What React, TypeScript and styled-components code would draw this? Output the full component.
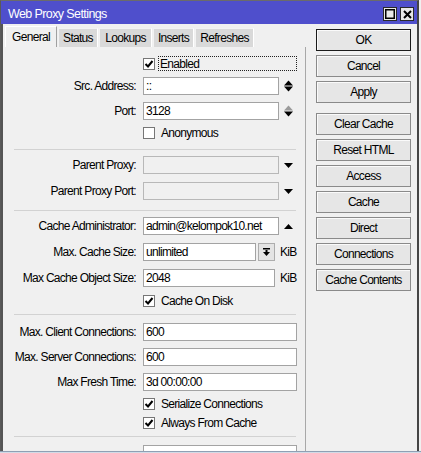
import * as React from 'react';
import styled, { createGlobalStyle } from 'styled-components';

const GlobalStyle = createGlobalStyle`
	html, body {
		margin: 0;
		padding: 0;
		background: #f0f0f0;
	}
	body {
		font-family: "Liberation Sans", Arial, sans-serif;
		font-size: 12px;
		letter-spacing: -0.7px;
		color: #000;
	}
	* {
		box-sizing: border-box;
	}
`;

const Screen = styled.div`
	width: 421px;
	height: 453px;
	display: flex;
	flex-direction: column;
	overflow: hidden;
	background: #f0f0f0;
`;

const Window = styled.div`
	width: 419px;
	height: 451px;
	display: flex;
	flex-direction: column;
	overflow: hidden;
	border-top: 1px solid #6b6b6b;
	border-left: 1px solid #5a5a5a;
	border-right: 2px solid #454545;
	background: #f0f0f0;
`;

const Taskbar = styled.div`
	height: 2px;
	border-top: 1px solid #8fa0b4;
	background: #d2dbe6;
`;

const TitleBar = styled.div`
	height: 23px;
	flex-shrink: 0;
	display: flex;
	align-items: center;
	background: #4f4fcc;
	color: #fff;
	padding: 2px 3px 0 7px;
`;

const Title = styled.div`
	flex: 1;
	font-size: 12.5px;
	letter-spacing: -0.6px;
	color: #fff;
`;

const TitleButtons = styled.div`
	display: flex;
	gap: 3px;
	align-self: flex-end;
	margin-bottom: 3px;
`;

const TitleButton = styled.div`
	width: 14px;
	height: 14px;
	background: #e8e8e8;
	border: 1px solid #2a2a2a;
	display: flex;
	align-items: center;
	justify-content: center;
`;

const Body = styled.div`
	flex: 1;
	display: flex;
	border-left: 2px solid #555;
	min-height: 0;
`;

const TabArea = styled.div`
	width: 303px;
	display: flex;
	flex-direction: column;
	padding-top: 2px;
`;

const TabStrip = styled.div`
	height: 21px;
	display: flex;
	align-items: flex-end;
	gap: 1px;
	padding-left: 2px;
	flex-shrink: 0;
`;

const Tab = styled.div<{ $active?: boolean; $w: number }>`
	width: ${props => props.$w}px;
	height: ${props => props.$active ? '21px' : '19px'};
	flex-shrink: 0;
	display: flex;
	align-items: center;
	justify-content: center;
	background: ${props => props.$active ? '#f0f0f0' : '#d9d9d9'};
	border-top: 1px solid ${props => props.$active ? '#ffffff' : '#f2f2f2'};
	border-left: 1px solid ${props => props.$active ? '#ffffff' : '#f2f2f2'};
	border-right: 1px solid ${props => props.$active ? '#a0a0a0' : '#ffffff'};
	white-space: nowrap;
`;

const Panel = styled.div`
	flex: 1;
	border-right: 1px solid #a8a8a8;
	display: flex;
	flex-direction: column;
	min-height: 0;
`;

const Section = styled.div<{ $top: number; $bottom: number }>`
	padding-top: ${props => props.$top}px;
	padding-bottom: ${props => props.$bottom}px;
	display: flex;
	flex-direction: column;
	flex-shrink: 0;
`;

const Separator = styled.div`
	height: 1px;
	margin: 0 9px 0 11px;
	background: #d2d2d2;
	flex-shrink: 0;
`;

const Row = styled.div<{ $h: number }>`
	height: ${props => props.$h}px;
	display: flex;
	align-items: center;
	flex-shrink: 0;
`;

const Label = styled.div`
	width: 133px;
	margin-right: 7px;
	text-align: right;
	white-space: nowrap;
	flex-shrink: 0;
`;

const TextBox = styled.div<{ $w: number; $disabled?: boolean }>`
	width: ${props => props.$w}px;
	height: 18px;
	flex-shrink: 0;
	border: 1px solid ${props => props.$disabled ? '#b8b8b8' : '#a3a3a3'};
	background: ${props => props.$disabled ? '#f0f0f0' : '#ffffff'};
	padding-left: 2px;
	display: flex;
	align-items: center;
	white-space: nowrap;
	overflow: hidden;
`;

const Trailer = styled.div`
	margin-left: 5px;
	width: 9px;
	display: flex;
	align-items: center;
	justify-content: center;
`;

const SmallButton = styled.div`
	width: 17px;
	height: 18px;
	margin-left: 2px;
	background: #e4e4e4;
	border: 1px solid #adadad;
	display: flex;
	align-items: center;
	justify-content: center;
`;

const Unit = styled.div`
	margin-left: 5px;
`;

const CheckBox = styled.div`
	width: 12px;
	height: 12px;
	margin-left: 140px;
	border: 1px solid #767676;
	background: #fff;
	display: flex;
	align-items: center;
	justify-content: center;
	flex-shrink: 0;
`;

const CheckLabel = styled.div<{ $focused?: boolean }>`
	margin-left: ${props => props.$focused ? '3px' : '5px'};
	padding: 0 1px;
	height: 15px;
	display: flex;
	align-items: center;
	border: ${props => props.$focused ? '1px dotted #222' : 'none'};
	width: ${props => props.$focused ? '139px' : 'auto'};
`;

const ButtonColumn = styled.div`
	padding: 5px 0 0 10px;
	display: flex;
	flex-direction: column;
	gap: 10px;
`;

const ButtonGroup = styled.div`
	display: flex;
	flex-direction: column;
	gap: 4px;
`;

const Button = styled.div<{ $primary?: boolean }>`
	width: 95px;
	height: 22px;
	display: flex;
	align-items: center;
	justify-content: center;
	background: #e6e6e6;
	border: 1px solid ${props => props.$primary ? '#1a1a1a' : '#8a8a8a'};
	box-shadow: inset 1px 1px 0 #fafafa;
	white-space: nowrap;
`;

const Check = () => (
	<svg width="10" height="10" viewBox="0 0 10 10">
		<path d="M1.5 5 L4 7.5 L8.5 2" fill="none" stroke="#000" strokeWidth="2" />
	</svg>
);

const Spinner = ({ dim }: { dim?: boolean }) => (
	<svg width="9" height="12" viewBox="0 0 9 12">
		<path d="M0 5.5 L4.5 0.5 L9 5.5 Z" fill={dim ? '#9a9a9a' : '#000'} />
		<path d="M0 6.5 L4.5 11.5 L9 6.5 Z" fill="#000" />
	</svg>
);

const ArrowDown = () => (
	<svg width="9" height="5" viewBox="0 0 9 5">
		<path d="M0 0 L9 0 L4.5 5 Z" fill="#000" />
	</svg>
);

const ArrowUp = () => (
	<svg width="9" height="5" viewBox="0 0 9 5">
		<path d="M0 5 L9 5 L4.5 0 Z" fill="#000" />
	</svg>
);

const DropIcon = () => (
	<svg width="7" height="8" viewBox="0 0 7 8">
		<rect x="0" y="0" width="7" height="1.5" fill="#000" />
		<rect x="2.5" y="2" width="2" height="2.5" fill="#000" />
		<path d="M0 4 L7 4 L3.5 8 Z" fill="#000" />
	</svg>
);

const MaxIcon = () => (
	<svg width="10" height="10" viewBox="0 0 10 10">
		<rect x="0.75" y="0.75" width="8.5" height="8.5" fill="none" stroke="#000" strokeWidth="1.5" />
	</svg>
);

const CloseIcon = () => (
	<svg width="9" height="9" viewBox="0 0 9 9">
		<path d="M1 1 L8 8 M8 1 L1 8" stroke="#000" strokeWidth="2" />
	</svg>
);

interface CheckRowProps {
	label: string;
	checked?: boolean;
	focused?: boolean;
}

const CheckRow = ({ label, checked, focused }: CheckRowProps) => (
	<Row $h={19}>
		<CheckBox>{checked && <Check />}</CheckBox>
		<CheckLabel $focused={focused}>{label}</CheckLabel>
	</Row>
);

const tabs = [
	{ name: 'General', width: 52 },
	{ name: 'Status', width: 40 },
	{ name: 'Lookups', width: 53 },
	{ name: 'Inserts', width: 41 },
	{ name: 'Refreshes', width: 59 },
];

export default function App() {
	return (
		<Screen>
			<GlobalStyle />
			<Window>
				<TitleBar>
					<Title>Web Proxy Settings</Title>
					<TitleButtons>
						<TitleButton><MaxIcon /></TitleButton>
						<TitleButton><CloseIcon /></TitleButton>
					</TitleButtons>
				</TitleBar>
				<Body>
					<TabArea>
						<TabStrip>
							{tabs.map((t, i) => <Tab key={t.name} $w={t.width} $active={i === 0}>{t.name}</Tab>)}
						</TabStrip>
						<Panel>
							<Section $top={7} $bottom={7}>
								<CheckRow label="Enabled" checked focused />
								<Row $h={25}>
									<Label>Src. Address:</Label>
									<TextBox $w={136}>::</TextBox>
									<Trailer><Spinner /></Trailer>
								</Row>
								<Row $h={25}>
									<Label>Port:</Label>
									<TextBox $w={136}>3128</TextBox>
									<Trailer><Spinner dim /></Trailer>
								</Row>
								<CheckRow label="Anonymous" />
							</Section>
							<Separator />
							<Section $top={2} $bottom={6}>
								<Row $h={26}>
									<Label>Parent Proxy:</Label>
									<TextBox $w={136} $disabled />
									<Trailer><ArrowDown /></Trailer>
								</Row>
								<Row $h={26}>
									<Label>Parent Proxy Port:</Label>
									<TextBox $w={136} $disabled />
									<Trailer><ArrowDown /></Trailer>
								</Row>
							</Section>
							<Separator />
							<Section $top={2} $bottom={4}>
								<Row $h={26}>
									<Label>Cache Administrator:</Label>
									<TextBox $w={136}>admin@kelompok10.net</TextBox>
									<Trailer><ArrowUp /></Trailer>
								</Row>
								<Row $h={26}>
									<Label>Max. Cache Size:</Label>
									<TextBox $w={113}>unlimited</TextBox>
									<SmallButton><DropIcon /></SmallButton>
									<Unit>KiB</Unit>
								</Row>
								<Row $h={26}>
									<Label>Max Cache Object Size:</Label>
									<TextBox $w={132}>2048</TextBox>
									<Unit>KiB</Unit>
								</Row>
								<CheckRow label="Cache On Disk" checked />
							</Section>
							<Separator />
							<Section $top={4} $bottom={4}>
								<Row $h={25}>
									<Label>Max. Client Connections:</Label>
									<TextBox $w={154}>600</TextBox>
								</Row>
								<Row $h={25}>
									<Label>Max. Server Connections:</Label>
									<TextBox $w={154}>600</TextBox>
								</Row>
								<Row $h={25}>
									<Label>Max Fresh Time:</Label>
									<TextBox $w={154}>3d 00:00:00</TextBox>
								</Row>
								<CheckRow label="Serialize Connections" checked />
								<CheckRow label="Always From Cache" checked />
							</Section>
							<Separator />
							<Section $top={4} $bottom={0}>
								<Row $h={25}>
									<Label />
									<TextBox $w={154} />
								</Row>
							</Section>
						</Panel>
					</TabArea>
					<ButtonColumn>
						<ButtonGroup>
							<Button $primary>OK</Button>
							<Button>Cancel</Button>
							<Button>Apply</Button>
						</ButtonGroup>
						<ButtonGroup>
							<Button>Clear Cache</Button>
							<Button>Reset HTML</Button>
							<Button>Access</Button>
							<Button>Cache</Button>
							<Button>Direct</Button>
							<Button>Connections</Button>
							<Button>Cache Contents</Button>
						</ButtonGroup>
					</ButtonColumn>
				</Body>
			</Window>
			<Taskbar />
		</Screen>
	);
}
